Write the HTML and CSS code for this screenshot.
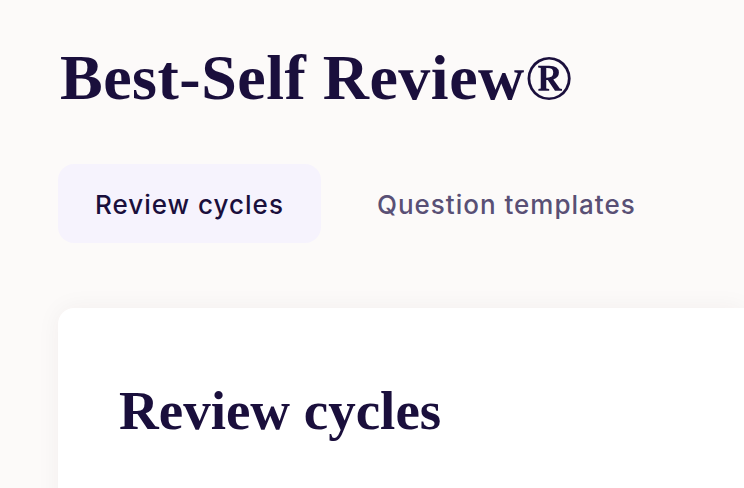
FILE: index.html
```html
<!DOCTYPE html>
<html lang="en">
<head>
  <meta charset="UTF-8" />
  <title>Best-Self Review</title>
  <link rel="stylesheet" href="styles.css">
</head>
<body>
  <div class="page">
    <h1 class="title">Best-Self Review®</h1>

    <nav class="tabs">
      <a class="tab active" href="#">Review cycles</a>
      <a class="tab" href="#">Question templates</a>
    </nav>

    <section class="card">
      <h2 class="card-title">Review cycles</h2>
    </section>
  </div>
</body>
</html>
```

FILE: styles.css
```css
html, body { margin: 0; padding: 0; }
body { background: #fcfaf9; font-family: Inter, "Noto Sans", sans-serif; color: #1a0f3c; overflow: hidden; height: 488px; }
.page { padding: 40px 0 0 58px; }
.title { font-family: "Liberation Serif", serif; font-weight: 700; font-size: 64px; line-height: 76px; margin: 0 0 0 2px; color: #1a0f3c; letter-spacing: 0.5px; }
.tabs { display: flex; gap: 19px; margin-top: 48px; }
.tab { display: block; padding: 2px 37px 0; height: 77px; line-height: 77px; border-radius: 16px; font-size: 26px; font-weight: 500; letter-spacing: 1px; color: #595075; text-decoration: none; }
.tab.active { background: #f6f3fd; color: #1a0f3c; }
.card { margin-top: 65px; background: #fff; border-radius: 16px 0 0 0; box-shadow: 0 0 24px rgba(60, 30, 10, 0.05); padding: 70px 61px 60px; height: 300px; }
.card-title { font-family: "Liberation Serif", serif; font-weight: 700; font-size: 55px; line-height: 66px; margin: 0; color: #1a0f3c; }
```
